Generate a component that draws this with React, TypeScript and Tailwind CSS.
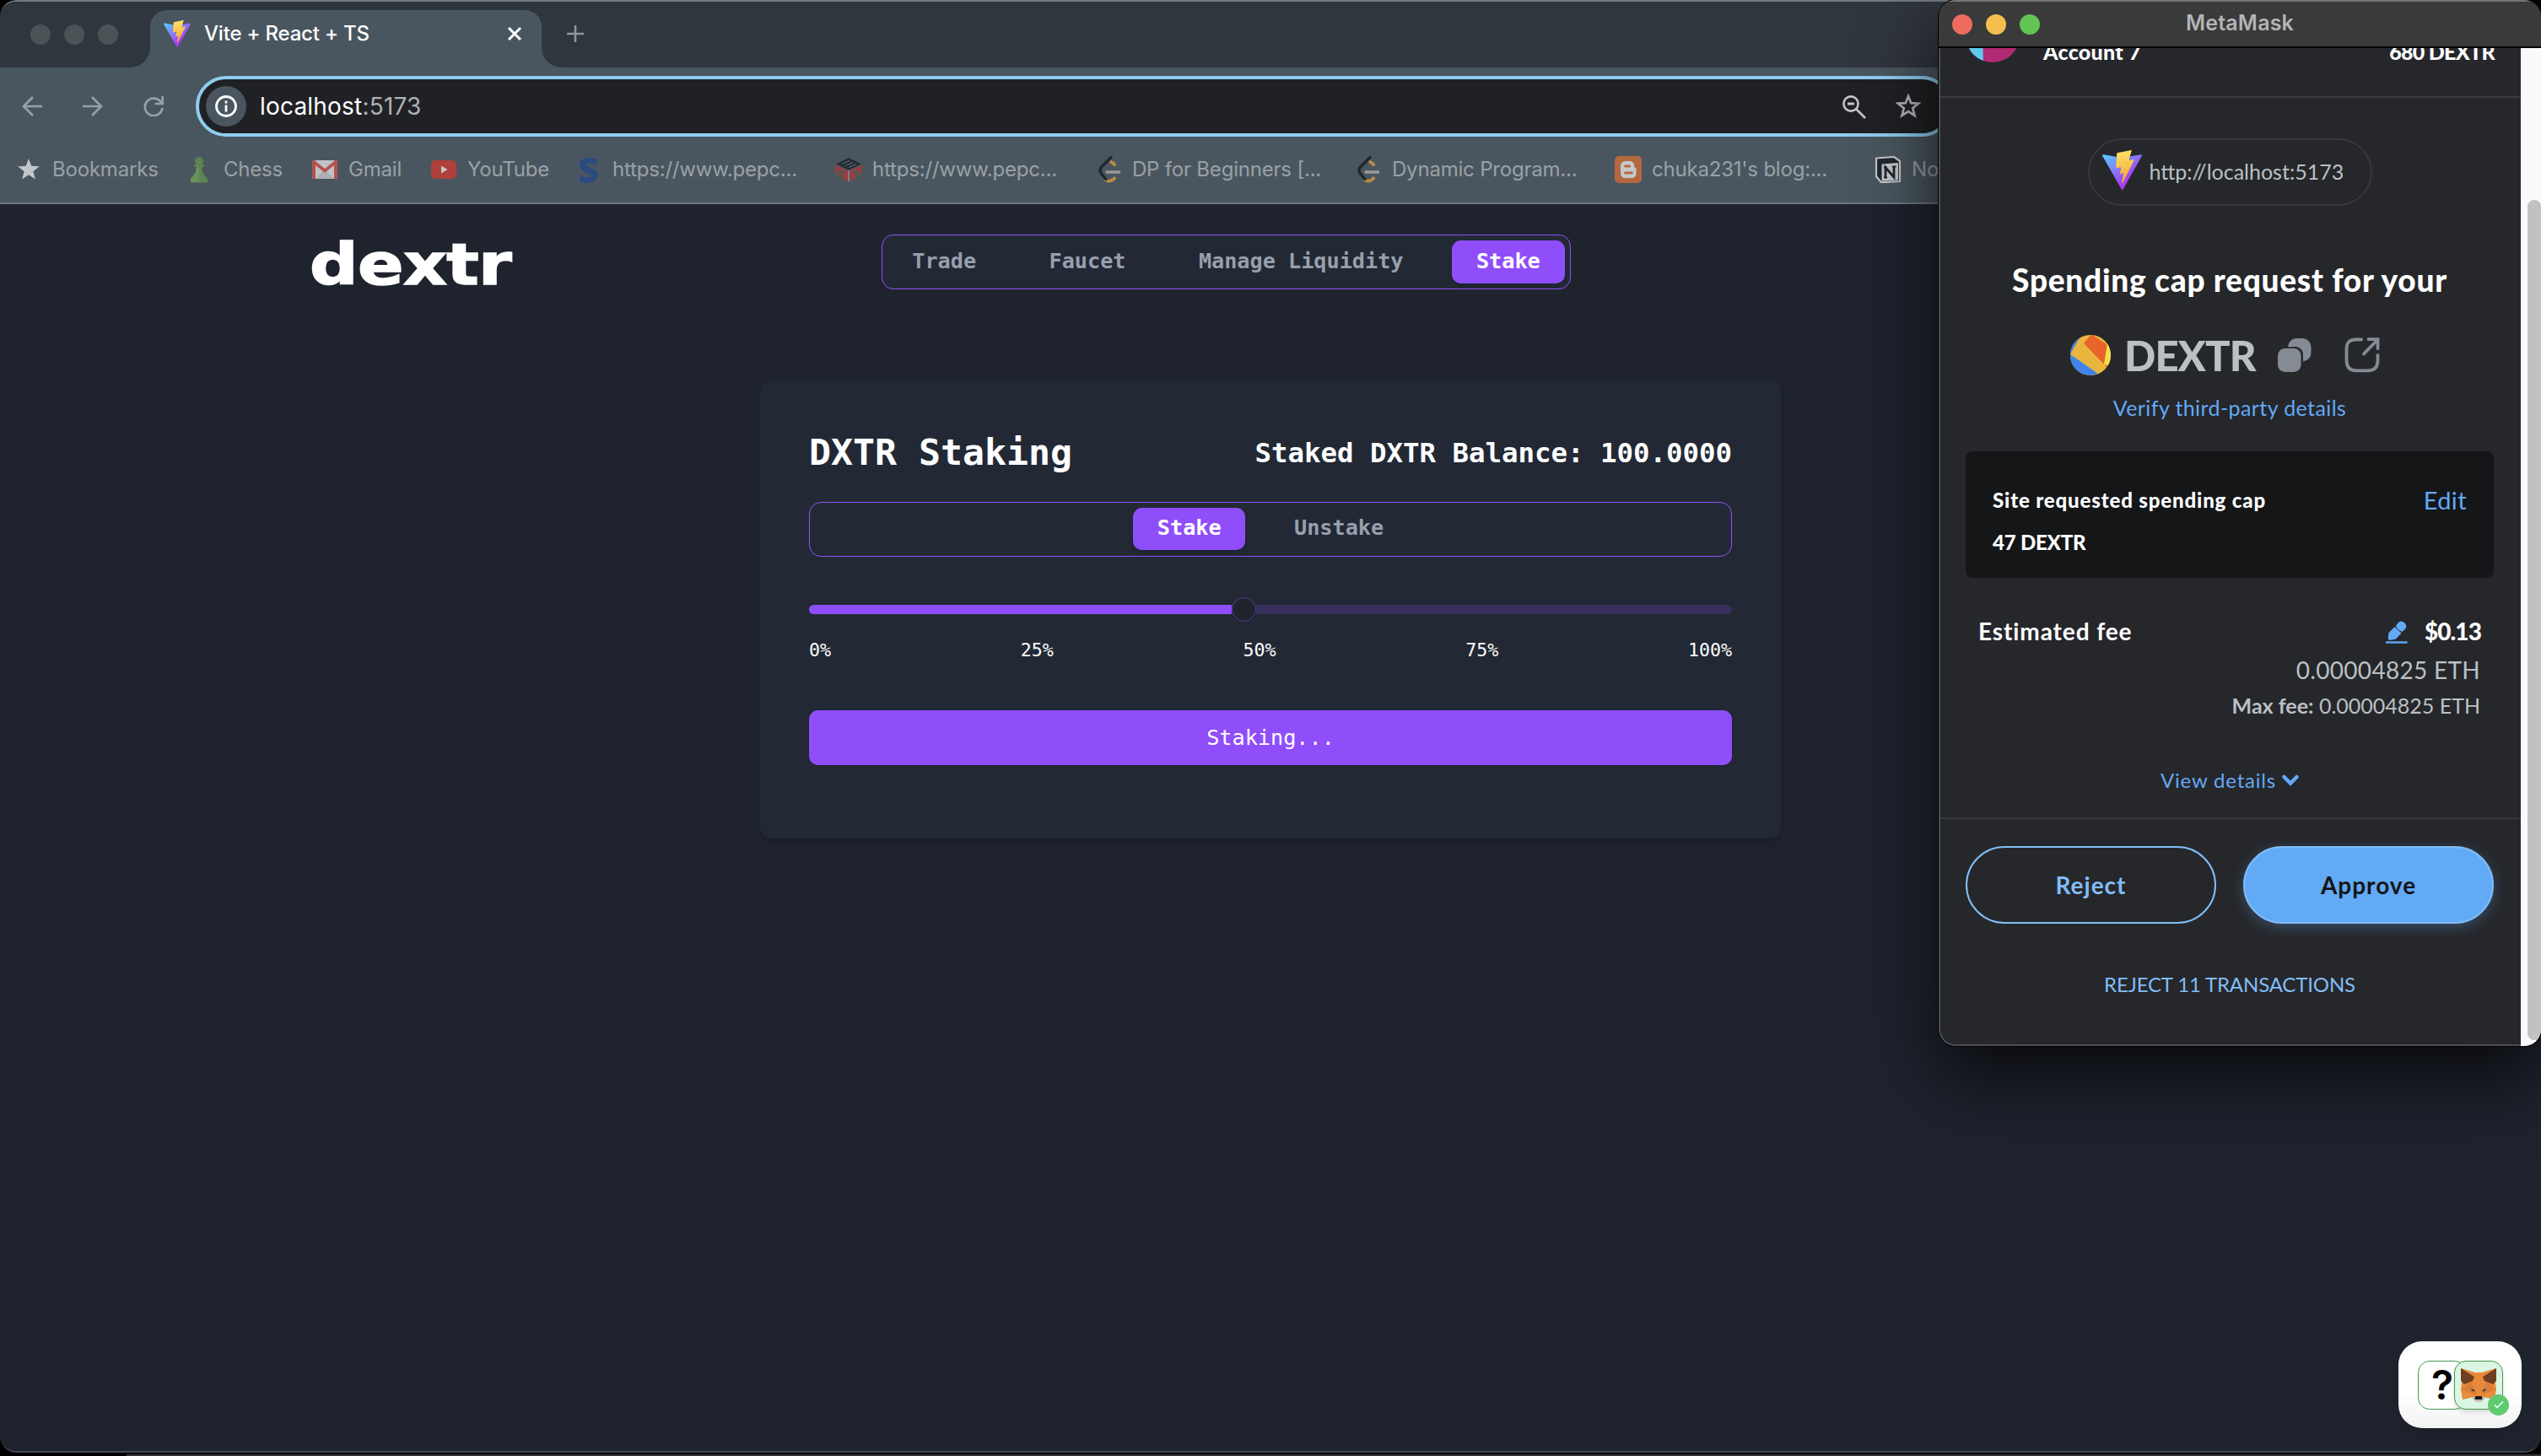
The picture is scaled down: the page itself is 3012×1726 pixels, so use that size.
import type { ReactNode } from "react";

const mono = "font-['DejaVu_Sans_Mono',monospace]";

function ViteIcon({ id, className }: { id: string; className: string }) {
  return (
    <svg viewBox="0 0 256 257" className={className}>
      <defs>
        <linearGradient id={id + "a"} x1="-.828%" x2="57.636%" y1="7.652%" y2="78.411%">
          <stop offset="0%" stopColor="#5bc8ff" />
          <stop offset="100%" stopColor="#a63cf2" />
        </linearGradient>
        <linearGradient id={id + "b"} x1="43.376%" x2="50.316%" y1="2.242%" y2="89.03%">
          <stop offset="0%" stopColor="#ffe066" />
          <stop offset="100%" stopColor="#f5ab37" />
        </linearGradient>
      </defs>
      <path fill={`url(#${id}a)`} d="M255.153 37.938L134.897 252.976c-2.483 4.44-8.862 4.466-11.382.048L.875 37.958c-2.746-4.814 1.371-10.646 6.827-9.67l120.385 21.517a6.537 6.537 0 0 0 2.322-.004l117.867-21.483c5.438-.991 9.574 4.796 6.877 9.62Z" />
      <path fill={`url(#${id}b)`} d="M185.432.063L96.44 17.501a3.268 3.268 0 0 0-2.634 3.014l-5.474 92.456a3.268 3.268 0 0 0 3.997 3.378l24.777-5.718c2.318-.535 4.413 1.507 3.936 3.838l-7.361 36.047c-.495 2.426 1.782 4.5 4.151 3.78l15.304-4.649c2.372-.72 4.652 1.36 4.15 3.788l-11.698 56.621c-.732 3.542 3.979 5.473 5.943 2.437l1.313-2.028l72.516-144.72c1.215-2.423-.88-5.186-3.54-4.672l-25.505 4.922c-2.396.462-4.435-1.77-3.759-4.114l16.646-57.705c.677-2.35-1.37-4.583-3.769-4.113Z" />
    </svg>
  );
}

function TabStrip() {
  return (
    <div className="flex h-[78px] shrink-0 bg-[#30363d]">
      <div className="flex w-[178px] items-start gap-4 pt-[27px] pl-9">
        <span className="size-6 rounded-full bg-[#4c5356]" />
        <span className="size-6 rounded-full bg-[#4c5356]" />
        <span className="size-6 rounded-full bg-[#4c5356]" />
      </div>
      <div className="relative mt-[10px] flex h-[68px] w-[464px] rounded-t-[20px] bg-[#4a565f]">
        <svg viewBox="0 0 24 24" className="absolute bottom-0 -left-6 size-6">
          <path d="M24 0v24H0A24 24 0 0 0 24 0z" fill="#4a565f" />
        </svg>
        <svg viewBox="0 0 24 24" className="absolute -right-6 bottom-0 size-6">
          <path d="M0 0v24h24A24 24 0 0 1 0 0z" fill="#4a565f" />
        </svg>
        <ViteIcon id="tab" className="mt-[12px] ml-4 size-8" />
        <span className="mt-[10px] ml-[16px] text-[24px] leading-9 font-medium tracking-[-0.2px] text-white">
          Vite + React + TS
        </span>
        <svg viewBox="0 0 20 20" className="mt-[18px] mr-[22px] ml-auto size-5">
          <path d="M3 3l14 14M17 3L3 17" stroke="#fff" strokeWidth="3" />
        </svg>
      </div>
      <svg viewBox="0 0 20 20" className="mt-[28px] ml-[30px] size-5">
        <path d="M10 0v20M0 10h20" stroke="#8f9699" strokeWidth="2.6" />
      </svg>
    </div>
  );
}

function Toolbar() {
  return (
    <div className="flex h-[90px] shrink-0 items-center bg-[#4a565f] pt-[2px]">
      <svg viewBox="0 0 24 24" className="ml-[26px] size-6">
        <path d="M24 12H2M13 1L2 12l11 11" fill="none" stroke="#97a0a6" strokeWidth="2.7" />
      </svg>
      <svg viewBox="0 0 24 24" className="ml-[48px] size-6">
        <path d="M0 12h22M11 1l11 11-11 11" fill="none" stroke="#97a0a6" strokeWidth="2.7" />
      </svg>
      <svg viewBox="0 0 24 24" className="ml-[48px] size-6">
        <path d="M21 7.5A10.3 10.3 0 1 0 22.4 14" fill="none" stroke="#97a0a6" strokeWidth="2.7" />
        <path d="M22.6 0v9H13.6" fill="none" stroke="#97a0a6" strokeWidth="2.7" />
      </svg>
      <div className="ml-[38px] flex h-[72px] w-[2082px] items-center rounded-full border-4 border-[#8fcdf0] bg-[#202124] pl-[8px]">
        <span className="flex size-12 items-center justify-center rounded-full bg-[#4a565f]">
          <svg viewBox="0 0 26 26" className="size-[26px]">
            <circle cx="13" cy="13" r="11.5" fill="none" stroke="#fff" strokeWidth="2.8" />
            <path d="M13 11.5v8M13 6.5v3" stroke="#fff" strokeWidth="2.8" />
          </svg>
        </span>
        <span className="ml-[16px] text-[28px] tracking-[0.2px] text-white">
          localhost<span className="text-[#aeb1b5]">:5173</span>
        </span>
        <svg viewBox="0 0 28 28" className="mt-[2px] mr-[35px] ml-auto size-7">
          <circle cx="10" cy="10" r="8.6" fill="none" stroke="#c4c5c7" strokeWidth="2.6" />
          <path d="M6 10h8M16 16l11 11" stroke="#c4c5c7" strokeWidth="2.8" />
        </svg>
        <svg viewBox="0 0 30 30" className="mr-[33px] size-[30px]">
          <path d="M15 3l3.2 8.2 8.8.5-6.8 5.6 2.3 8.6L15 21l-7.5 4.9 2.3-8.6L3 11.7l8.8-.5z" fill="none" stroke="#b4b5b7" strokeWidth="2.7" />
        </svg>
      </div>
    </div>
  );
}

function Bookmark({ className, iconClass, icon, label }: { className: string; iconClass: string; icon: ReactNode; label: string }) {
  return (
    <div className={"flex shrink-0 items-center whitespace-nowrap " + className}>
      <span className={"flex shrink-0 items-center " + iconClass}>{icon}</span>
      <span className="text-[24px] tracking-[-0.2px] text-[#9aa1a6]">{label}</span>
    </div>
  );
}

function LeetIcon() {
  return (
    <svg viewBox="0 0 26 32" className="h-8 w-[26px]">
      <path d="M13.5 6.500c3 .5 5 2.500 6.500 5M8 27.500c3 3.500 9 2.500 12-2.500" fill="none" stroke="#b98b45" strokeWidth="3.6" />
      <path d="M15 1.500L4 12.500c-3 3-2.500 6 0 9l5 6" fill="none" stroke="#22272b" strokeWidth="3.4" strokeLinecap="round" />
      <path d="M10 19h15" stroke="#9a9a98" strokeWidth="3.4" strokeLinecap="round" />
    </svg>
  );
}

function Bookmarks() {
  return (
    <div className="flex h-[72px] shrink-0 items-center overflow-hidden border-b-2 border-[#6f7980] bg-[#4a565f] pb-[9px] pl-[21px]">
      <Bookmark className="w-[204px]" iconClass="w-[41px]" label="Bookmarks" icon={
        <svg viewBox="0 0 26 25" className="h-[25px] w-[26px]">
          <path d="M13 0l3.300 8.800 9.500.500-7.400 5.900 2.500 9.200L13 19.200l-7.900 5.200 2.500-9.200L.200 9.300l9.500-.5z" fill="#c1c6ca" />
        </svg>
      } />
      <Bookmark className="w-[145px]" iconClass="w-[40px]" label="Chess" icon={
        <svg viewBox="0 0 22 32" className="h-8 w-[22px]">
          <path d="M11 1a5 5 0 0 1 3.800 8.200L17 11v2h-3c0 5 2 8 5.500 12 2 2.500 2 5 1.500 6.500H1C.500 30 .500 27.500 2.500 25 6 21 8 18 8 13H5v-2l2.200-1.800A5 5 0 0 1 11 1z" fill="#5c8452" />
          <path d="M8 13h3v18H1C.500 30 .500 27.500 2.500 25 6 21 8 18 8 13z" fill="#66925a" />
        </svg>
      } />
      <Bookmark className="w-[141px]" iconClass="w-[43px]" label="Gmail" icon={
        <svg viewBox="0 0 30 22" className="h-[22px] w-[30px]">
          <rect width="30" height="22" rx="2" fill="#bfc2c6" />
          <path d="M4 22L15 10l11 12z" fill="#adb1b6" />
          <path d="M0 2a2 2 0 0 1 4 0v20H2a2 2 0 0 1-2-2zM26 2a2 2 0 0 1 4 0v18a2 2 0 0 1-2 2h-2z" fill="#b4524c" />
          <path d="M1.500 1.500L15 12.500l13.500-11" fill="none" stroke="#b4524c" strokeWidth="3.600" />
        </svg>
      } />
      <Bookmark className="w-[174px]" iconClass="w-[43px]" label="YouTube" icon={
        <svg viewBox="0 0 30 22" className="h-[22px] w-[30px]">
          <rect width="30" height="22" rx="5" fill="#b0403c" />
          <path d="M12 6.500v9l7.500-4.500z" fill="#c6c6c8" />
        </svg>
      } />
      <Bookmark className="w-[305px]" iconClass="w-[41px]" label="https://www.pepc..." icon={
        <span className="font-['Open_Sans',sans-serif] text-[42px] leading-8 font-extrabold text-[#2a4a80]">S</span>
      } />
      <Bookmark className="w-[312px]" iconClass="w-[44px]" label="https://www.pepc..." icon={
        <svg viewBox="0 0 32 28" className="h-7 w-8">
          <path d="M16 0l15 7.500-15 7L1 7.500z" fill="#252c38" />
          <path d="M0 8.500l15 7V28L0 20z" fill="#963f42" />
          <path d="M32 8.500l-15 7V28l15-8z" fill="#963f42" />
          <path d="M0 20l8 4v-3l-8-4zM32 20l-8 4v-3l8-4z" fill="#43614f" />
          <path d="M8 7.500l9-4M12 9.500l9-4M16 11.500l9-4" stroke="#5d6770" strokeWidth="1.200" />
          <path d="M4 13.500l6 2.800v3.500l-6-2.800zM28 13.500l-6 2.800v3.500l6-2.800z" fill="#4a565f" />
          <path d="M16 15v13" stroke="#8a8f96" strokeWidth="1.500" />
        </svg>
      } />
      <Bookmark className="w-[307px]" iconClass="w-[40px]" label="DP for Beginners [..." icon={<LeetIcon />} />
      <Bookmark className="w-[305px]" iconClass="w-[41px]" label="Dynamic Program..." icon={<LeetIcon />} />
      <Bookmark className="w-[308px]" iconClass="w-[44px]" label="chuka231's blog:..." icon={
        <svg viewBox="0 0 32 32" className="size-8">
          <rect width="32" height="32" rx="5" fill="#b4683f" />
          <path d="M12.500 6h5.500a5 5 0 0 1 5 5v1.500c0 1.200 2.500 1 2.500 2.500v5.500a5.500 5.500 0 0 1-5.500 5.500h-7.500a5.500 5.500 0 0 1-5.500-5.500v-9A5.500 5.500 0 0 1 12.500 6z" fill="#c6c8cb" />
          <path d="M12.500 12h5M12.500 20h8" stroke="#b4683f" strokeWidth="2.800" strokeLinecap="round" />
        </svg>
      } />
      <Bookmark className="w-[120px]" iconClass="w-[44px]" label="Notion" icon={
        <svg viewBox="0 0 32 32" className="size-8">
          <path d="M2 2.500L23 1l7 5v24l-22 1.200L2 24z" fill="#22272b" stroke="#c3c8cc" strokeWidth="2.200" strokeLinejoin="round" />
          <path d="M8.500 9.500L28 8v20.500L8.500 29.800z" fill="#c3c8cc" />
          <path d="M13 25.500v-12l10 11.500V12.500" fill="none" stroke="#22272b" strokeWidth="2.800" />
          <path d="M11 13.500h4M21 12.500h4.500M11 25.500h4" stroke="#22272b" strokeWidth="1.800" />
        </svg>
      } />
    </div>
  );
}

function NavTab({ label, active }: { label: string; active?: boolean }) {
  return (
    <span className={"rounded-[10.800px] px-[28.800px] py-[7.200px] text-[25.200px] leading-[36px] font-bold " + (active ? "bg-[#904efa] text-white shadow-md" : "text-[#989fac]")}>
      <span className="relative -top-px">{label}</span>
    </span>
  );
}

function StakingPage() {
  return (
    <div className={"flex grow flex-col bg-[#1f232e] " + mono}>
      <header className="relative flex h-[101px] items-end justify-center pr-[105px]">
        <div className="absolute top-[32px] left-[367px] origin-left scale-x-[1.200] font-['DejaVu_Sans',sans-serif] text-[67px] leading-[80px] font-bold tracking-[-0.500px] text-white [-webkit-text-stroke:1.500px_white]">
          dextr
        </div>
        <nav className="flex gap-[28.800px] rounded-[14px] border border-[#9150f8] bg-[#222935] p-[6.200px]">
          <NavTab label="Trade" />
          <NavTab label="Faucet" />
          <NavTab label="Manage Liquidity" />
          <NavTab label="Stake" active />
        </nav>
      </header>
      <main className="mt-[108px] ml-[901px] flex h-[543px] w-[1210px] flex-col rounded-[14px] bg-[#222935] px-[58px] pt-[57px] shadow-lg">
        <div className="flex items-center justify-between text-white">
          <h1 className="text-[43.200px] leading-[57.600px] font-bold">DXTR Staking</h1>
          <p className="text-[32.400px] leading-[50px] font-bold">Staked DXTR Balance: 100.0000</p>
        </div>
        <div className="mt-[29px] flex h-[65px] items-center justify-center gap-[28.800px] rounded-[14px] border border-[#9150f8]">
          <NavTab label="Stake" active />
          <NavTab label="Unstake" />
        </div>
        <div className="mt-[48px] flex h-[29px] items-center">
          <div className="h-[11px] w-[501px] rounded-l-full bg-[#904efa]" />
          <div className="size-[29px] rounded-full border border-[#573a94] bg-[#1f232e] shadow" />
          <div className="h-[11px] grow rounded-r-full bg-[#382e5b]" />
        </div>
        <div className="mt-[20px] flex justify-between text-[21.600px] leading-[28.800px] text-white">
          <span>0%</span>
          <span>25%</span>
          <span>50%</span>
          <span>75%</span>
          <span>100%</span>
        </div>
        <button className="mt-[57px] flex h-[65px] items-center justify-center rounded-[10.800px] bg-[#904efa] text-[25.200px] text-white shadow">
          Staking...
        </button>
      </main>
    </div>
  );
}

function MetaMaskWindow() {
  return (
    <section className="absolute top-0 left-[2298px] flex h-[1240px] w-[714px] flex-col overflow-hidden rounded-[20px] font-['Lato',sans-serif] shadow-[0_36px_90px_rgba(0,0,0,0.750),0_0_0_1px_#000]">
      <div className="relative flex h-[57px] shrink-0 items-center border-t-2 border-b-2 border-t-[#757575] border-b-black bg-[#3a3a3a] pl-[16px]">
        <span className="size-6 rounded-full bg-[#ed6b5f]" />
        <span className="ml-4 size-6 rounded-full bg-[#f5bf4f]" />
        <span className="ml-4 size-6 rounded-full bg-[#61c554]" />
        <span className="absolute inset-x-0 top-[7px] text-center font-['Inter',sans-serif] text-[25px] leading-9 font-semibold tracking-[0.200px] text-[#b4b4b4]">MetaMask</span>
      </div>
      <div className="flex min-h-0 grow">
        <div className="flex w-[690px] flex-col rounded-bl-[20px] border-b-2 border-l-2 border-[#4d4e50] bg-[#26272b] pr-[2px]">
          <div className="-mr-[2px] flex h-[59px] items-start overflow-hidden border-b-2 border-[#3a3c41] pr-[31px] pl-[30px] text-[25px] leading-[30px] font-black text-white">
            <svg viewBox="0 0 64 64" className="-mt-[47px] size-16 shrink-0">
              <clipPath id="acct"><circle cx="32" cy="32" r="32" /></clipPath>
              <g clipPath="url(#acct)">
                <rect width="64" height="64" fill="#b32a74" />
                <path d="M0 0h19l2 64H0z" fill="#5fc8ee" />
              </g>
            </svg>
            <span className="-mt-[11px] ml-[28px] tracking-[0.300px]">Account 7</span>
            <span className="-mt-[11px] ml-auto tracking-[-0.700px]">680 DEXTR</span>
          </div>
          <div className="mt-[48px] flex h-[80px] w-[337px] items-center self-center rounded-full border-2 border-[#36383d] pl-[15px]">
            <ViteIcon id="site" className="-mt-[6px] h-[47px] w-[47px] shrink-0" />
            <span className="ml-[9px] text-[25px] whitespace-nowrap text-[#bbc0c5]">http://localhost:5173</span>
          </div>
          <h2 className="mt-[60px] text-center text-[37px] leading-[56px] font-black tracking-[0.750px] whitespace-nowrap text-white">
            Spending cap request for your
          </h2>
          <div className="mt-[37px] flex items-center pl-[154px]">
            <svg viewBox="0 0 48 48" className="size-12">
              <clipPath id="tok"><circle cx="24" cy="24" r="24" /></clipPath>
              <g clipPath="url(#tok)">
                <rect width="48" height="48" fill="#e8b63f" />
                <path d="M0 0h13L0 23zM0 23l33 23-9 2H0z" fill="#4083ea" />
                <path d="M25-1L16 10l24 25 4-23z" fill="#e9642a" />
                <path d="M44 10l6 4v22H40z" fill="#f5e04c" />
                <path d="M40 35l5 1-1 3z" fill="#e9642a" />
              </g>
            </svg>
            <span className="ml-[16px] w-[158px] text-[49px] leading-[48px] font-black tracking-[-0.900px] text-[#bbc0c5]">DEXTR</span>
            <svg viewBox="0 0 40 40" className="ml-[24px] size-10">
              <path d="M12 10.500A10.500 10.500 0 0 1 22.500 0H29a10.500 10.500 0 0 1 10.500 10.500V17A10.500 10.500 0 0 1 30 27.400V19a9 9 0 0 0-9-9z" fill="#858b95" />
              <rect x="0" y="12" width="27.500" height="28" rx="8.500" fill="#858b95" />
            </svg>
            <svg viewBox="0 0 42 42" className="ml-[39px] size-[42px]">
              <path d="M20 2.500h-6C6 2.500 2.500 6 2.500 14v13c0 8 3.500 12.300 11.500 12.300h14c8 0 11.500-4.300 11.500-12.300v-6" fill="none" stroke="#858b95" strokeWidth="3.800" strokeLinecap="round" />
              <path d="M23 19.500L38.500 3.500M28.500 2.200h11v11" fill="none" stroke="#858b95" strokeWidth="3.800" strokeLinecap="round" />
            </svg>
          </div>
          <span className="mt-[20px] text-center text-[25px] leading-9 tracking-[0.400px] text-[#62aaf5]">Verify third-party details</span>
          <div className="mx-[30px] mt-[34px] flex h-[150px] flex-col rounded-[8px] bg-[#141618] px-8 pt-[38px] text-white">
            <div className="flex items-center justify-between">
              <span className="text-[24px] leading-10 font-black tracking-[0.850px]">Site requested spending cap</span>
              <span className="text-[29px] leading-9 tracking-[0.400px] text-[#62aaf5]">Edit</span>
            </div>
            <span className="mt-[10px] text-[24px] leading-10 font-black tracking-[-0.200px]">47 DEXTR</span>
          </div>
          <div className="mt-[43px] flex h-[40px] items-center pr-[45px] pl-[45px] text-white">
            <span className="text-[28px] font-bold tracking-[0.900px]">Estimated fee</span>
            <svg viewBox="0 0 26 28" className="mt-[2px] mr-[20px] ml-auto h-7 w-[26px]">
              <path d="M0 26.500h25.500" stroke="#62aaf5" strokeWidth="2.400" />
              <path d="M10.500 8l8 7.500-6.500 7-7.500 1.500-1.800-1.500L3.500 15z" fill="#62aaf5" />
              <path d="M12 6.500L15.500 2.500c4-3.500 11 3 8 7.500L20 13.800c-4-.8-7.500-4-8-7.300z" fill="#62aaf5" />
            </svg>
            <span className="text-[28px] font-black tracking-[-0.900px]">$0.13</span>
          </div>
          <div className="mt-[2px] pr-[46px] text-right text-[28px] leading-[48px] tracking-[0.300px] text-[#bbc0c5]">0.00004825 ETH</div>
          <div className="pr-[46px] text-right text-[25px] leading-[36px] text-[#bbc0c5]"><b>Max fee:</b> 0.00004825 ETH</div>
          <div className="mt-[53px] flex items-center justify-center text-[24px] leading-9 tracking-[0.800px] text-[#62aaf5]">
            View details
            <svg viewBox="0 0 20 14" className="ml-[7px] h-[14px] w-5">
              <path d="M2.500 3l7.500 7.500L17.500 3" fill="none" stroke="#62aaf5" strokeWidth="4.500" strokeLinecap="round" />
            </svg>
          </div>
          <div className="mt-[26px] -mr-[2px] flex gap-8 border-t-2 border-[#36383d] px-[30px] pt-8 text-[28px] font-bold tracking-[1px]">
            <button className="h-[92px] w-[297px] rounded-full border-2 border-[#81bdf7] text-[#81bdf7]">Reject</button>
            <button className="h-[92px] w-[297px] rounded-full border-2 border-[#81bdf7] bg-[#62aaf5] text-[#141618] shadow-[0_4px_16px_rgba(98,170,245,0.300)]">Approve</button>
          </div>
          <span className="mt-[54px] text-center text-[24px] leading-9 tracking-[-0.150px] text-[#81bdf7]">REJECT 11 TRANSACTIONS</span>
        </div>
        <div className="flex w-6 flex-col items-end bg-[#fafafa] pt-[180px]">
          <div className="h-[996px] w-4 rounded-full bg-[#c1c1c1]" />
        </div>
      </div>
    </section>
  );
}

function FoxIcon() {
  return (
    <svg viewBox="0 0 44 40" className="h-10 w-11">
      <path d="M1 0l17 5h8l17-5-1 17 1 8-2 12-12-3-4 5h-6l-4-5-12 3L1 25l1-8z" fill="#e8893a" />
      <path d="M1 0l16 10-2 5-10 4-4-4zM43 0L27 10l2 5 10 4 4-4z" fill="#6e3f22" />
      <path d="M13 16l6 15-7-2-10-4zM31 16l-6 15 7-2 10-4z" fill="#d97d38" />
      <path d="M3 29h10l2 5-12 3zM41 29H31l-2 5 12 3z" fill="#ea8c3c" />
      <path d="M13 24l5 2-1 1.500-3-.5zM31 24l-5 2 1 1.500 3-.5z" fill="#3a4a52" />
      <path d="M14 35l4-2h8l4 2-5 5h-6z" fill="#cbbdb0" />
      <path d="M18 33h8l.5 4h-9z" fill="#1a1a1a" />
    </svg>
  );
}

function WalletBadge() {
  return (
    <div className="absolute top-[1590px] left-[2843px] flex h-[103px] w-[146px] items-center rounded-[28px] bg-gradient-to-t from-[#f2f2f3] to-white to-40% pl-[23px] shadow-lg">
      <div className="flex h-[58px] w-[58px] shrink-0 items-center justify-center rounded-[14px] border border-[#45984f] bg-white font-['Inter',sans-serif] text-[48px] leading-none font-semibold text-black">
        ?
      </div>
      <div className="relative -ml-[15px] flex size-[58px] shrink-0 items-center justify-center rounded-[14px] border border-[#45984f] bg-[#d9f6e2] shadow-md">
        <FoxIcon />
        <span className="absolute -right-[8px] -bottom-[8px] flex size-[25px] items-center justify-center rounded-full bg-[#5fcb71]">
          <svg viewBox="0 0 12 10" className="h-[10px] w-3">
            <path d="M1 5.500l3 3L11 1.500" fill="none" stroke="#fff" strokeWidth="1.400" />
          </svg>
        </span>
      </div>
    </div>
  );
}

export default function App() {
  return (
    <div className="relative h-[1726px] w-[3012px] overflow-hidden bg-black font-['Inter',sans-serif]">
      <div className="absolute right-0 bottom-0 left-[150px] h-[2px] bg-[#333]" />
      <div className="flex h-[1722px] flex-col overflow-hidden rounded-[20px] border-t-2 border-b-2 border-t-[#73797d] border-b-[#454954]">
        <TabStrip />
        <Toolbar />
        <Bookmarks />
        <StakingPage />
      </div>
      <MetaMaskWindow />
      <WalletBadge />
    </div>
  );
}
